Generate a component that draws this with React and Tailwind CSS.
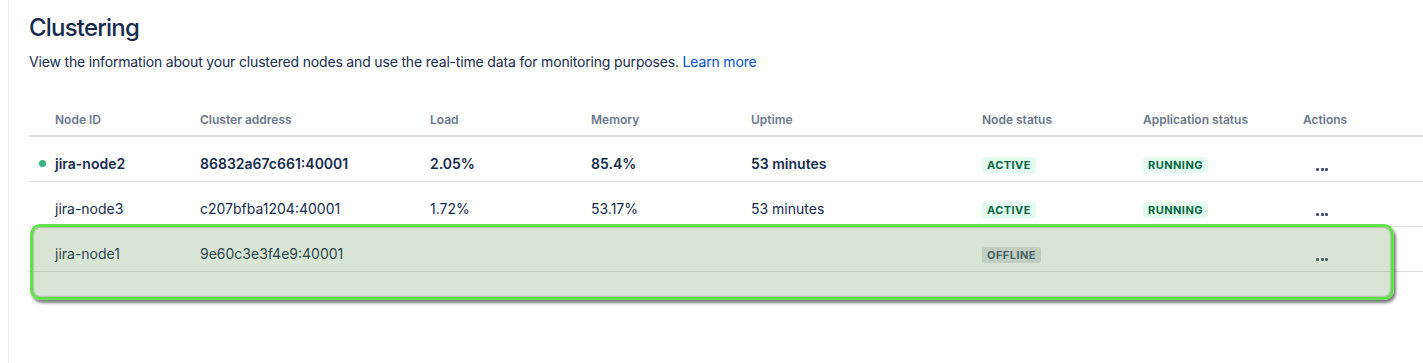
import React from "react";

const columns = [
  { label: "Node ID", width: "w-[171px]" },
  { label: "Cluster address", width: "w-[230px]" },
  { label: "Load", width: "w-[161px]" },
  { label: "Memory", width: "w-[160px]" },
  { label: "Uptime", width: "w-[231px]" },
  { label: "Node status", width: "w-[161px]" },
  { label: "Application status", width: "w-[160px]" },
  { label: "Actions", width: "" },
];

const nodes = [
  {
    id: "jira-node2",
    address: "86832a67c661:40001",
    load: "2.05%",
    memory: "85.4%",
    uptime: "53 minutes",
    status: "ACTIVE",
    app: "RUNNING",
    current: true,
  },
  {
    id: "jira-node3",
    address: "c207bfba1204:40001",
    load: "1.72%",
    memory: "53.17%",
    uptime: "53 minutes",
    status: "ACTIVE",
    app: "RUNNING",
  },
  {
    id: "jira-node1",
    address: "9e60c3e3f4e9:40001",
    load: "",
    memory: "",
    uptime: "",
    status: "OFFLINE",
    app: "",
  },
];

const Lozenge = ({ children }) => {
  const offline = children === "OFFLINE";
  return (
    <span
      className={`inline-block rounded-[3px] px-[5px] text-[11px] font-bold leading-4 tracking-[0.45px] ${
        offline ? "bg-[#dfe1e6] text-[#42526e]" : "bg-[#e3fcef] text-[#006644]"
      }`}
    >
      {children}
    </span>
  );
};

const MoreDots = () => (
  <div className="flex gap-[1.5px] pl-[13px] pt-[12px]">
    <span className="h-[3px] w-[3px] rounded-[1px] bg-[#42526e]" />
    <span className="h-[3px] w-[3px] rounded-[1px] bg-[#42526e]" />
    <span className="h-[3px] w-[3px] rounded-[1px] bg-[#42526e]" />
  </div>
);

export default function App() {
  return (
    <div className="min-h-[363px] bg-white font-['Inter','Liberation_Sans',sans-serif] text-[#172b4d]">
      <div className="ml-2 min-h-[363px] border-l border-[#ebecf0] pl-5 pt-[14px]">
        <h1 className="text-[24px] font-medium leading-[28px] tracking-[-0.8px]">Clustering</h1>
        <p className="mt-[10px] text-[14px] leading-5 tracking-[-0.17px]">
          View the information about your clustered nodes and use the real-time data for monitoring purposes.{" "}
          <a href="#" className="text-[#0052cc]">
            Learn more
          </a>
        </p>

        {/* Nodes table */}
        <div className="relative mt-[27px]">
          <table className="w-full table-fixed border-collapse text-left">
            <thead>
              <tr className="border-b-2 border-[#dfe1e6]">
                {columns.map((col, i) => (
                  <th
                    key={col.label}
                    className={`${col.width} h-[37px] p-0 pt-[5px] align-middle text-[12px] font-semibold text-[#6b778c] ${
                      i === 0 ? "pl-[26px]" : ""
                    }`}
                  >
                    {col.label}
                  </th>
                ))}
              </tr>
            </thead>
            <tbody>
              {nodes.map((node) => (
                <tr
                  key={node.id}
                  className={`h-[45px] border-b border-[#dfe1e6] text-[14px] ${node.current ? "font-semibold" : ""}`}
                >
                  <td className="p-0 pl-[10px] pt-[9px]">
                    <div className="flex items-center">
                      <span className="flex w-4">
                        {node.current && <span className="h-[7px] w-[7px] rounded-full bg-[#36b37e]" />}
                      </span>
                      {node.id}
                    </div>
                  </td>
                  <td className="p-0 pt-[9px]">{node.address}</td>
                  <td className="p-0 pt-[9px]">{node.load}</td>
                  <td className="p-0 pt-[9px]">{node.memory}</td>
                  <td className="p-0 pt-[9px]">{node.uptime}</td>
                  <td className="p-0 pt-[10px]">
                    <Lozenge>{node.status}</Lozenge>
                  </td>
                  <td className="p-0 pt-[10px]">{node.app && <Lozenge>{node.app}</Lozenge>}</td>
                  <td className="p-0 pt-[9px]">
                    <MoreDots />
                  </td>
                </tr>
              ))}
            </tbody>
          </table>

          {/* Highlight annotation over the offline node */}
          <div className="pointer-events-none absolute left-[1px] top-[125px] h-[76px] w-[1364px] rounded-[10px] border-[3px] border-[#5fe24a] bg-[rgba(99,147,83,0.25)] shadow-[2px_3px_3px_rgba(0,0,0,0.5),inset_0_0_2px_rgba(0,0,0,0.55)]" />
        </div>
      </div>
    </div>
  );
}
